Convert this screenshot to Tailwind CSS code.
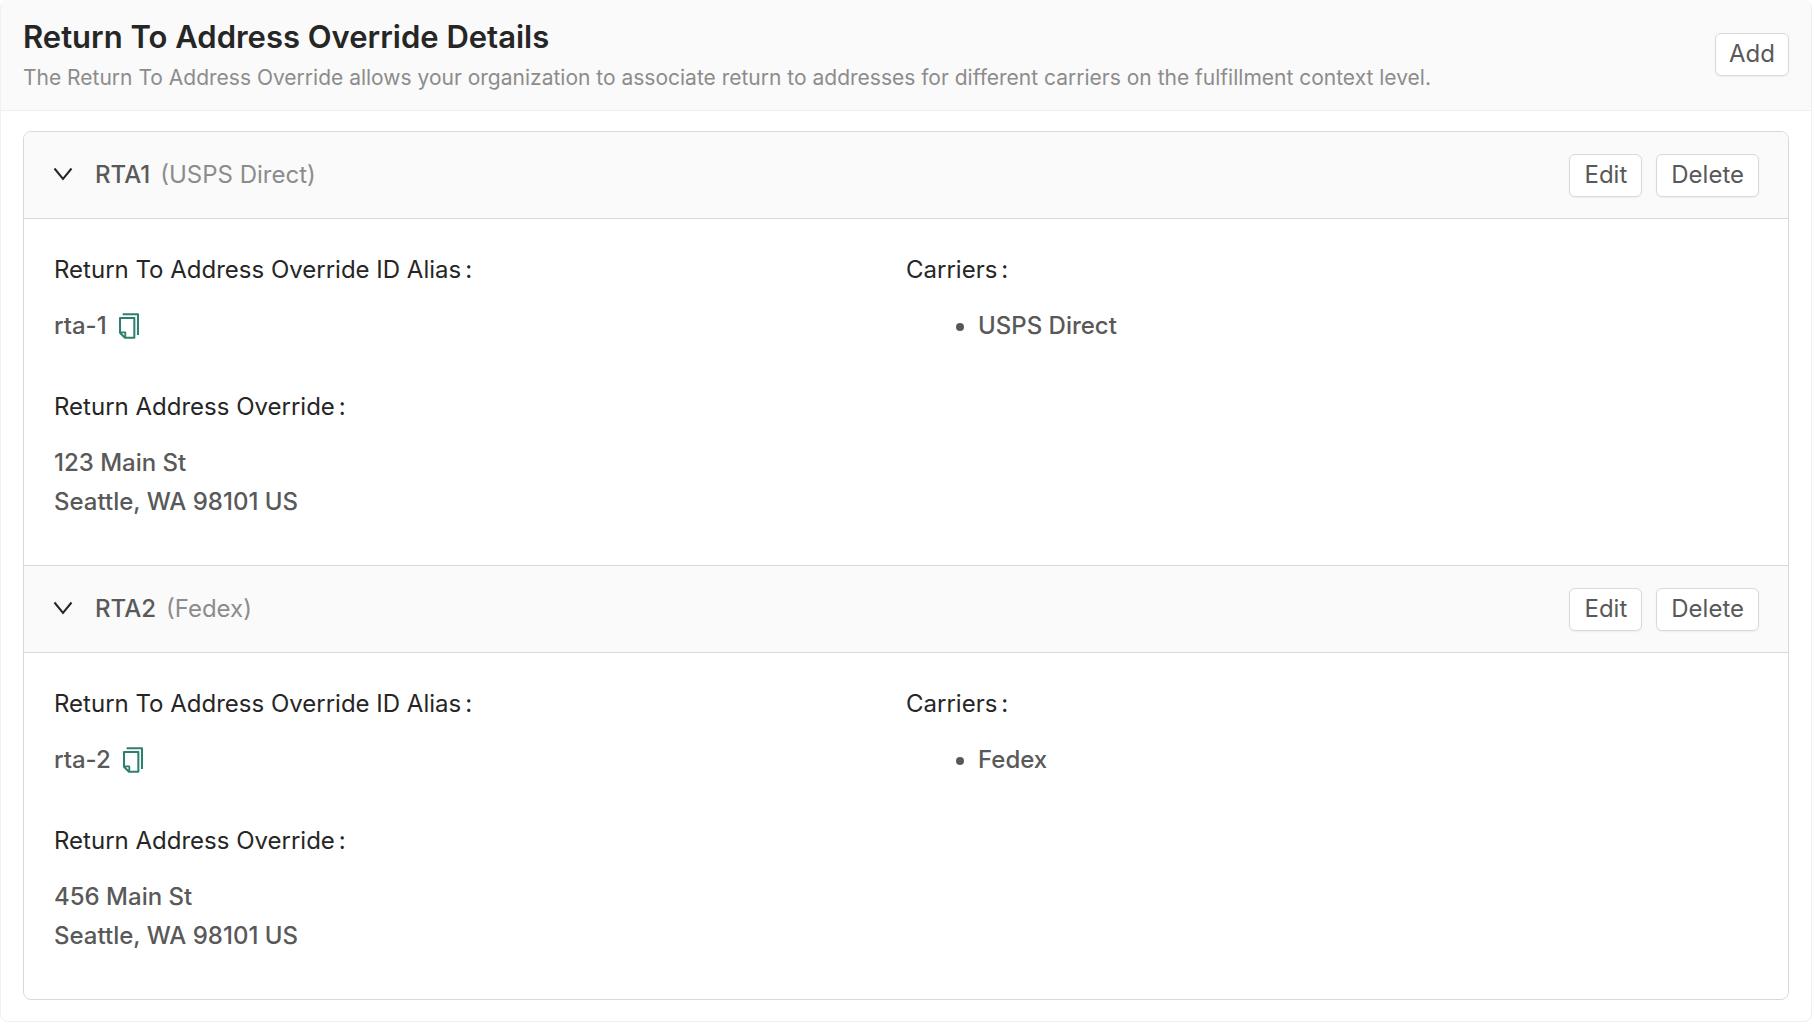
<!DOCTYPE html>
<html lang="en">
<head>
  <meta charset="UTF-8">
  <title>Return To Address Override Details</title>
  <script src="https://cdn.jsdelivr.net/npm/@tailwindcss/browser@4"></script>
</head>
<body class="bg-white font-['Inter',sans-serif] text-2xl text-[#595959]">

  <!-- Shared icons -->
  <svg class="hidden">
    <symbol id="chevron" viewBox="0 0 20 20">
      <path d="M1.5 3.5 L10 14 L18.5 3.5" fill="none" stroke="currentColor" stroke-width="2" />
    </symbol>
    <symbol id="copy" viewBox="160 64 704 896">
      <path fill="currentColor" d="M832 64H296c-4.4 0-8 3.6-8 8v56c0 4.4 3.6 8 8 8h496v688c0 4.4 3.6 8 8 8h56c4.4 0 8-3.6 8-8V96c0-17.7-14.3-32-32-32zM704 192H192c-17.7 0-32 14.3-32 32v530.7c0 8.5 3.4 16.6 9.4 22.6l173.3 173.3c2.2 2.2 4.7 4 7.4 5.5v1.9h4.2c3.5 1.3 7.2 2 11 2H704c17.7 0 32-14.3 32-32V224c0-17.7-14.3-32-32-32zM350 856.2L263.9 770H350v86.2zM664 888H414V746c0-22.1-17.9-40-40-40H232V264h432v624z" />
    </symbol>
  </svg>

  <main class="mr-[2px] border border-t-0 border-[#f0f0f0] rounded-lg overflow-hidden">

    <header class="flex items-center justify-between bg-[#fafafa] border-b border-[#f0f0f0] px-[22px] pt-4 pb-3">
      <div>
        <h1 class="text-[31px] leading-[42px] font-semibold text-[#262626]">Return To Address Override Details</h1>
        <p class="text-[21px] leading-10 text-[#8c8c8c]">The Return To Address Override allows your organization to associate return to addresses for different carriers on the fulfillment context level.</p>
      </div>
      <button class="h-[43px] mb-[6px] px-[13px] bg-white border border-[#d9d9d9] rounded-md shadow-xs hover:text-[#2f7f6f]">Add</button>
    </header>

    <div class="px-[22px] pt-5 pb-[21px]">
      <div class="border border-[#d9d9d9] rounded-lg overflow-hidden">

        <section>
          <div class="flex items-center h-[87px] px-[29px] bg-[#fafafa] border-b border-[#d9d9d9]">
            <button class="text-[#262626]" aria-label="Collapse RTA1" aria-expanded="true">
              <svg class="size-5"><use href="#chevron" /></svg>
            </button>
            <h2 class="ml-[22px] font-medium">RTA1</h2>
            <span class="ml-[10px] text-[#8c8c8c]">(USPS Direct)</span>
            <div class="ml-auto flex gap-[14px]">
              <button class="h-[43px] px-[14px] bg-white border border-[#d9d9d9] rounded-md shadow-xs hover:text-[#2f7f6f]">Edit</button>
              <button class="h-[43px] px-[14px] bg-white border border-[#d9d9d9] rounded-md shadow-xs hover:text-[#2f7f6f]">Delete</button>
            </div>
          </div>
          <div class="grid grid-cols-2 px-[30px] pt-[31px] pb-[44px] leading-[39px]">
            <dl>
              <dt class="text-[#262626]">Return To Address Override ID Alias<span class="ml-1">:</span></dt>
              <dd class="mt-[17px] flex items-center gap-3 font-medium">
                rta-1
                <button class="text-[#2f7f6f]" aria-label="Copy rta-1"><svg class="w-5 h-[26px]"><use href="#copy" /></svg></button>
              </dd>
              <dt class="mt-[42px] text-[#262626]">Return Address Override<span class="ml-1">:</span></dt>
              <dd class="mt-[17px] font-medium">123 Main St<br>Seattle, WA 98101 US</dd>
            </dl>
            <dl>
              <dt class="text-[#262626]">Carriers<span class="ml-1">:</span></dt>
              <dd class="mt-[17px] font-medium">
                <ul class="list-disc pl-[72px]">
                  <li>USPS Direct</li>
                </ul>
              </dd>
            </dl>
          </div>
        </section>

        <section class="border-t border-[#d9d9d9]">
          <div class="flex items-center h-[87px] px-[29px] bg-[#fafafa] border-b border-[#d9d9d9]">
            <button class="text-[#262626]" aria-label="Collapse RTA2" aria-expanded="true">
              <svg class="size-5"><use href="#chevron" /></svg>
            </button>
            <h2 class="ml-[22px] font-medium">RTA2</h2>
            <span class="ml-[10px] text-[#8c8c8c]">(Fedex)</span>
            <div class="ml-auto flex gap-[14px]">
              <button class="h-[43px] px-[14px] bg-white border border-[#d9d9d9] rounded-md shadow-xs hover:text-[#2f7f6f]">Edit</button>
              <button class="h-[43px] px-[14px] bg-white border border-[#d9d9d9] rounded-md shadow-xs hover:text-[#2f7f6f]">Delete</button>
            </div>
          </div>
          <div class="grid grid-cols-2 px-[30px] pt-[31px] pb-[44px] leading-[39px]">
            <dl>
              <dt class="text-[#262626]">Return To Address Override ID Alias<span class="ml-1">:</span></dt>
              <dd class="mt-[17px] flex items-center gap-3 font-medium">
                rta-2
                <button class="text-[#2f7f6f]" aria-label="Copy rta-2"><svg class="w-5 h-[26px]"><use href="#copy" /></svg></button>
              </dd>
              <dt class="mt-[42px] text-[#262626]">Return Address Override<span class="ml-1">:</span></dt>
              <dd class="mt-[17px] font-medium">456 Main St<br>Seattle, WA 98101 US</dd>
            </dl>
            <dl>
              <dt class="text-[#262626]">Carriers<span class="ml-1">:</span></dt>
              <dd class="mt-[17px] font-medium">
                <ul class="list-disc pl-[72px]">
                  <li>Fedex</li>
                </ul>
              </dd>
            </dl>
          </div>
        </section>

      </div>
    </div>
  </main>

</body>
</html>
